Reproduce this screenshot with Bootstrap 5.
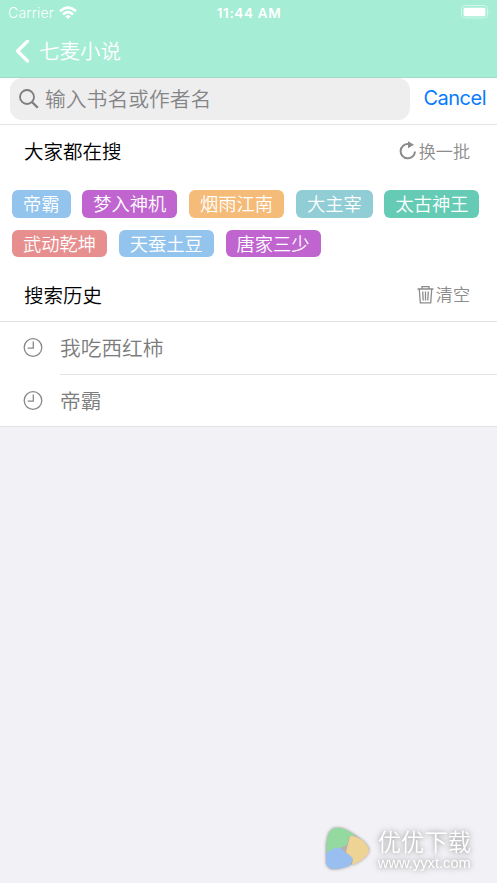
<!DOCTYPE html>
<html lang="zh-CN">
<head>
<meta charset="utf-8">
<meta name="viewport" content="width=device-width, initial-scale=1">
<title>七麦小说</title>
<link href="https://cdn.jsdelivr.net/npm/bootstrap@5.3.0/dist/css/bootstrap.min.css" rel="stylesheet">
<style>
body{background:#f2f1f6;font-family:Inter,"Noto Sans CJK SC",sans-serif;font-weight:350;min-height:883px;overflow:hidden}
svg{display:block;flex:none}
.top-area{background:#a5edd5;height:78px;border-bottom:1px solid #a4d9c7;color:#fff}
.status-line{height:26px;padding:0 7px 0 8px;display:grid;grid-template-columns:1fr auto 1fr;font-size:14px;line-height:26px}
.carrier-text{letter-spacing:.2px}
.clock-text{font-size:13.5px;font-weight:600;letter-spacing:.65px}
.title-line{height:51px;padding:0 15px;gap:9px;font-size:20.5px;line-height:50px}
.search-line{height:47px;padding:0 11px 4px 10px;border-bottom:1px solid #e4e4e6}
.search-field{width:400px;height:42px;background:#eee;border-radius:12px;padding:0 9px;gap:6px;color:#858588;font-size:20.8px}
.search-field span{padding-top:2px}
.cancel-link{color:#087bff;font-size:20px;font-weight:400;letter-spacing:-.5px;line-height:40px}
.section-head{padding:0 27px 0 24px;font-size:19.5px;color:#000}
.section-head h2{font-size:inherit;font-weight:350;line-height:52px}
.trend-head{height:53px}
.history-head{height:53px;border-bottom:1px solid #e2e2e4}
.history-head h2{padding-top:2px}
.side-action{color:#8c8c8c;font-size:17.1px;gap:2px}
.tag-area{height:91px;padding:12px 12px 0;gap:12px 11.8px;align-content:flex-start}
.tag-chip{height:27.5px;line-height:28.5px;font-size:18.25px;padding:0 11px;border-radius:6px;color:#fff}
.sky{background:#92c4ed}.violet{background:#c065d0}.amber{background:#f5bb78}.aqua{background:#91cdd5}.mint{background:#66cbb5}.rose{background:#e78e8e}
.history-row{height:52.5px;padding-left:23px;color:#7c7c7c;font-size:20.7px;gap:17px}
.history-row > span{height:100%;line-height:54px}
.history-row.with-line > span{border-bottom:1px solid #e5e5e7}
.history-list{border-bottom:1px solid #e2e2e5;height:105px}
.watermark{right:26px;bottom:9px;gap:6px;color:#fff}
.wm-text{text-shadow:0 0 4px #aaa,0 0 7px #aaa}
.wm-name{font-size:23.3px;line-height:28px;height:26px;font-weight:350}
.wm-url{font:14.7px/16px "Liberation Sans",sans-serif;height:15px}
</style>
</head>
<body>
<header class="top-area">
  <div class="status-line">
    <div class="d-flex align-items-center gap-1"><span class="carrier-text">Carrier</span>
      <svg width="20" height="16" viewBox="0 0 20 16" fill="none" stroke="#fff" stroke-width="2.6"><path d="M2 6.2Q10-.8 18 6.2M5 9.4Q10 5 15 9.4"/><path d="M7.2 11.3Q10 9 12.8 11.3L10 14Z" fill="#fff" stroke="none"/></svg>
    </div>
    <span class="clock-text">11:44 AM</span>
    <svg class="ms-auto mt-1" width="30" height="16" viewBox="0 0 30 16"><rect x="1.5" y="1.5" width="26" height="12.5" rx="3.6" fill="none" stroke="#d2f6ea"/><rect x="3.5" y="3.7" width="22" height="8.5" rx="1.7" fill="#fff"/><path d="M28.8 6q1.4 1.8 0 3.5Z" fill="#d2f6ea"/></svg>
  </div>
  <div class="title-line d-flex align-items-center">
    <svg width="15" height="24" viewBox="0 0 15 24" fill="none" stroke="#fff" stroke-width="3.3" stroke-linecap="round" stroke-linejoin="round"><path d="M12.500 1.200 2.500 11l10 10"/></svg>
    <span>七麦小说</span>
  </div>
</header>
<main class="bg-white">
  <div class="search-line d-flex justify-content-between">
    <div class="search-field d-flex align-items-center">
      <svg width="20" height="20" viewBox="0 0 20 20" fill="none" stroke="#7d7d80" stroke-width="1.8"><circle cx="8" cy="8" r="7"/><path d="m13 13 5.8 5.8" stroke-width="2.3"/></svg>
      <span>输入书名或作者名</span>
    </div>
    <span class="cancel-link">Cancel</span>
  </div>
  <section>
    <div class="section-head trend-head d-flex align-items-center justify-content-between">
      <h2 class="m-0">大家都在搜</h2>
      <div class="side-action d-flex align-items-center"><svg width="18" height="20" viewBox="0 0 18 20"><path d="M9.500 3A7.200 7.200 0 1 0 16 10.500" fill="none" stroke="#8b8b8b" stroke-width="2"/><path d="M9 .2 15 3.7 9 7.200Z" fill="#8b8b8b"/></svg><span>换一批</span></div>
    </div>
    <div class="tag-area d-flex flex-wrap">
      <span class="tag-chip sky">帝霸</span><span class="tag-chip violet">梦入神机</span><span class="tag-chip amber">烟雨江南</span><span class="tag-chip aqua">大主宰</span><span class="tag-chip mint">太古神王</span><span class="tag-chip rose">武动乾坤</span><span class="tag-chip sky">天蚕土豆</span><span class="tag-chip violet">唐家三少</span>
    </div>
  </section>
  <section>
    <div class="section-head history-head d-flex align-items-center justify-content-between">
      <h2 class="m-0">搜索历史</h2>
      <div class="side-action d-flex align-items-center"><svg width="17" height="18" viewBox="0 0 17 18" fill="none" stroke="#8c8c8c" stroke-width="1.3"><path d="M.5 3H16.5M5 2.5V.7h7v1.8M2.3 3.5l1 13.3h10.4l1-13.3M5.700 5.500l.5 9M8.500 5.500v9M11.300 5.500l-.5 9"/></svg><span>清空</span></div>
    </div>
    <div class="history-list">
      <div class="history-row with-line d-flex align-items-center"><svg width="20" height="20" viewBox="0 0 20 20" fill="none" stroke="#888" stroke-width="1.3"><circle cx="10" cy="9.5" r="8.8"/><path d="M10.3 3.5v6.6H4.700"/></svg><span class="flex-grow-1">我吃西红柿</span></div>
      <div class="history-row d-flex align-items-center"><svg width="20" height="20" viewBox="0 0 20 20" fill="none" stroke="#888" stroke-width="1.3"><circle cx="10" cy="9.5" r="8.8"/><path d="M10.3 3.5v6.6H4.700"/></svg><span class="flex-grow-1">帝霸</span></div>
    </div>
  </section>
</main>
<footer class="watermark position-fixed d-flex align-items-center">
  <svg width="50" height="50" viewBox="0 0 50 50"><defs><filter id="shade" x="-20%" y="-20%" width="140%" height="140%"><feDropShadow dx="0" dy="0" stdDeviation="1.8" flood-color="#555" flood-opacity=".65"/></filter></defs><g filter="url(#shade)"><path d="M14 4C23 3 43 16 46.500 24 49 32 27 43 15 45 6 46 4 42 4 33 4 17 5 5 14 4Z" fill="#b2b2b2"/><path d="M14 4C20 3 27 7 33 11.500L27 13 25 21 5 29C4 17 5 5 14 4Z" fill="#93d9a0"/><path d="M28 12C36 11 47 20 47 27 46 32 38 38 30 41L31 35 24 28Z" fill="#efd394"/><path d="M4 29Q12 23 18 24L24 29Q33 34 30 37L27 42Q4 50 4 37Z" fill="#99bff1"/></g></svg>
  <div class="wm-text"><div class="wm-name">优优下载</div><div class="wm-url">www.yyxt.com</div></div>
</footer>
<script src="https://cdn.jsdelivr.net/npm/bootstrap@5.3.0/dist/js/bootstrap.bundle.min.js"></script>
</body>
</html>
